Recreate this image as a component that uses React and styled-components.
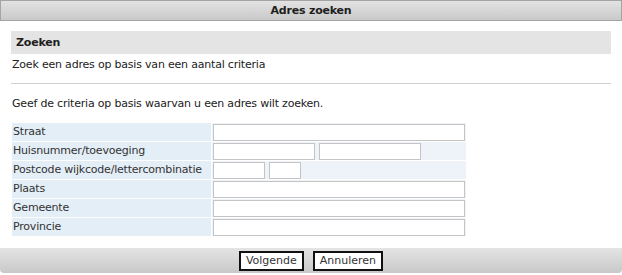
import React from 'react';
import styled, {createGlobalStyle} from 'styled-components';

const GlobalStyle = createGlobalStyle`
  html, body {
    margin: 0;
    padding: 0;
    background: #fff;
  }
  body {
    font-family: "DejaVu Sans", Verdana, sans-serif;
    font-size: 11px;
    letter-spacing: -0.2px;
    color: #222;
  }
`;

const Dialog = styled.div`
  width: 622px;
  height: 275px;
  display: flex;
  flex-direction: column;
  box-sizing: border-box;
`;

const TitleBar = styled.div`
  height: 21px;
  box-sizing: border-box;
  border: 1px solid #a4a4a4;
  background: linear-gradient(#e2e2e2, #c9c9c9);
  display: flex;
  align-items: center;
  justify-content: center;
  font-weight: bold;
  font-size: 11px;
  letter-spacing: -0.2px;
  color: #1e1e1e;
`;

const Body = styled.div`
  flex: 1;
  padding: 10px 11px 0 11px;
`;

const SectionHeader = styled.div`
  height: 23px;
  line-height: 23px;
  background: #e4e4e4;
  padding-left: 5px;
  font-weight: bold;
  font-size: 11px;
  letter-spacing: -0.2px;
  color: #1e1e1e;
`;

const Text = styled.p`
  margin: ${(p) => p.$margin || '0'};
  line-height: 14px;
`;

const Divider = styled.hr`
  border: 0;
  border-top: 1px solid #d0d0d0;
  margin: 11px 0 0 0;
  height: 0;
`;

const CriteriaGrid = styled.div`
  margin-top: 12px;
  display: grid;
  grid-template-columns: 199px 254px;
  grid-auto-rows: 18px;
  gap: 1px;
  padding: 0 1px;
`;

const Label = styled.div`
  background: #e4eef6;
  line-height: 18px;
  padding-left: 1px;
  color: #333;
  white-space: nowrap;
`;

const Field = styled.div`
  background: #edf3f8;
  display: flex;
  align-items: flex-start;
  gap: 4px;
  padding-left: 1px;
`;

const Input = styled.input`
  width: ${(p) => p.$w}px;
  height: 17px;
  box-sizing: border-box;
  border: 1px solid #c4c4c4;
  background: #fff;
  padding: 0 2px;
  margin: 1px 0 0 0;
  font: inherit;
  outline: none;
`;

const Footer = styled.div`
  height: 25px;
  margin-bottom: 2px;
  background: linear-gradient(#e4e4e4, #c8c8c8);
  border-radius: 0 0 4px 4px;
  display: flex;
  justify-content: center;
  align-items: center;
  gap: 9px;
`;

const Button = styled.button`
  height: 20px;
  box-sizing: border-box;
  border: 2px solid #111;
  background: #fff;
  font: inherit;
  color: #333;
  padding: 0 5px;
  cursor: pointer;
`;

const rows = [
  {label: 'Straat', inputs: [252]},
  {label: 'Huisnummer/toevoeging', inputs: [102, 102]},
  {label: 'Postcode wijkcode/lettercombinatie', inputs: [52, 32]},
  {label: 'Plaats', inputs: [252]},
  {label: 'Gemeente', inputs: [252]},
  {label: 'Provincie', inputs: [252]},
];

const App = () => (
  <>
    <GlobalStyle />
    <Dialog>
      <TitleBar>Adres zoeken</TitleBar>
      <Body>
        <SectionHeader>Zoeken</SectionHeader>
        <Text $margin="4px 0 0 1px">Zoek een adres op basis van een aantal criteria</Text>
        <Divider />
        <Text $margin="13px 0 0 1px">Geef de criteria op basis waarvan u een adres wilt zoeken.</Text>
        <CriteriaGrid>
          {rows.map((row) => (
            <React.Fragment key={row.label}>
              <Label>{row.label}</Label>
              <Field>
                {row.inputs.map((w, i) => (
                  <Input key={i} type="text" $w={w} />
                ))}
              </Field>
            </React.Fragment>
          ))}
        </CriteriaGrid>
      </Body>
      <Footer>
        <Button>Volgende</Button>
        <Button>Annuleren</Button>
      </Footer>
    </Dialog>
  </>
);

export default App;
